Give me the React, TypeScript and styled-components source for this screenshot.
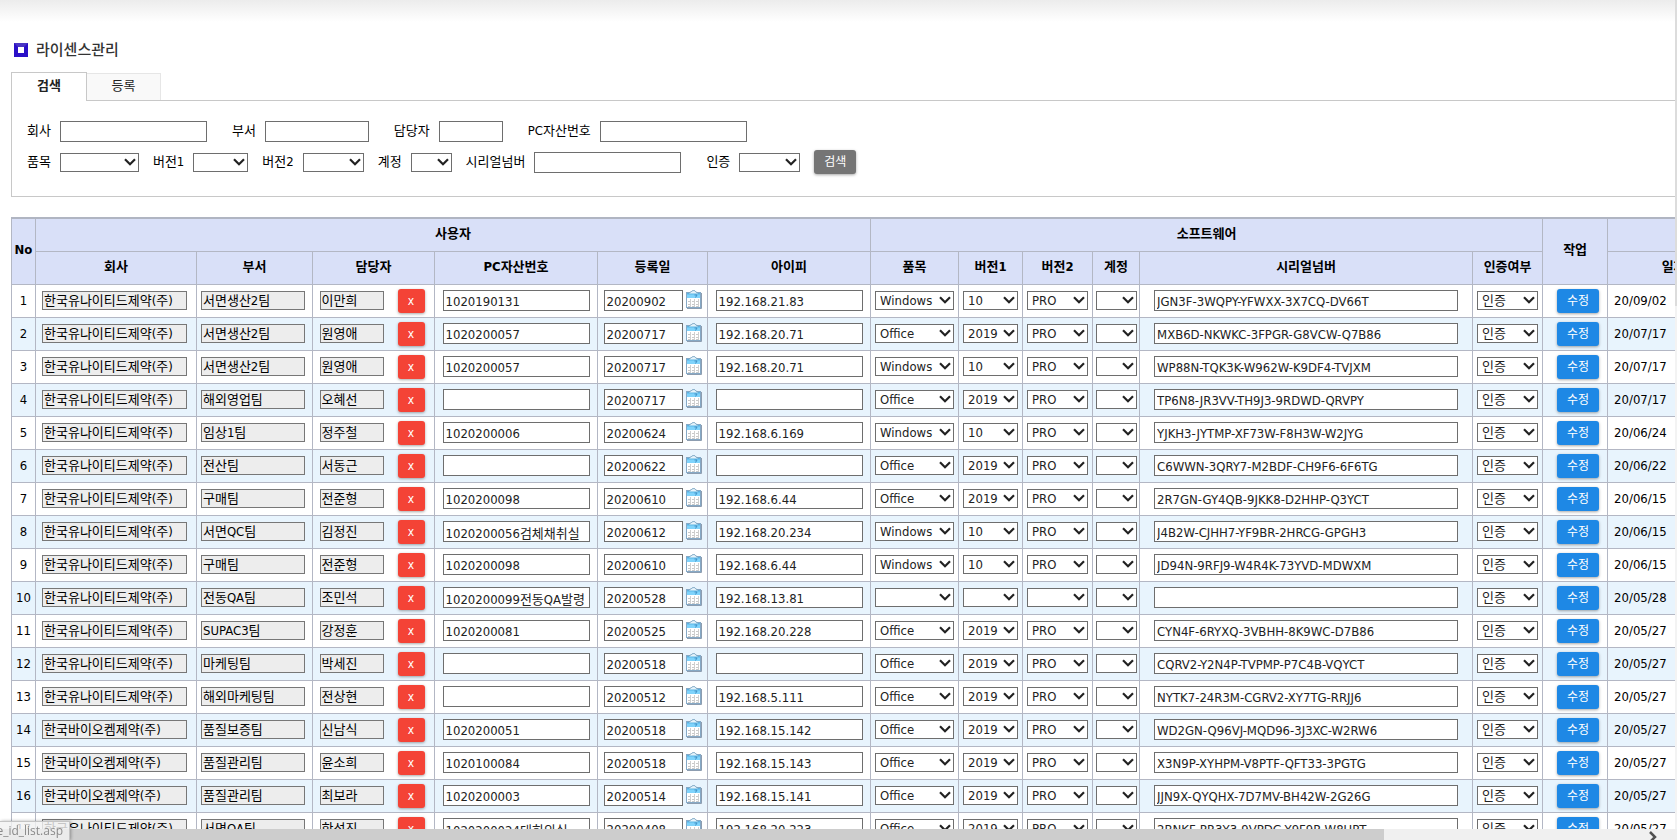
import React from 'react';
import styled, { createGlobalStyle, css } from 'styled-components';

const fontStack = `'DejaVu Sans Condensed', 'Noto Sans CJK KR', sans-serif`;

const GlobalStyle = createGlobalStyle`
  *, *::before, *::after { box-sizing: border-box; }
  body {
    margin: 0;
    background: #fff;
    color: #000;
    font-family: ${fontStack};
    font-size: 13px;
    line-height: 16px;
  }
  input, select, button { font: inherit; }
`;

const Shell = styled.div`
  display: grid;
  grid-template-columns: minmax(0, 1fr) 2px;
  grid-template-rows: minmax(0, 1fr) 11px;
  height: 100vh;
  overflow: hidden;
`;

const Content = styled.main`
  overflow: auto;
  scrollbar-width: none;
  padding-left: 11px;
  background: linear-gradient(#ececec, #fff) 0 0 / 100% 22px no-repeat;
`;

const SideRail = styled.div`
  background: linear-gradient(#dcdcdc, #dcdcdc) 0 0 / 100% 306px no-repeat #f3f3f3;
`;

const BottomRail = styled.div`
  grid-column: 1 / -1;
  display: flex;
  justify-content: space-between;
  background: #f0f0f0;
`;

const RailThumb = styled.div`
  width: 82.5%;
  background: #cdcdcd;
`;

const RailArrow = styled.svg`
  width: 10px;
  height: 11px;
  margin-right: 18px;
`;

const Title = styled.h1`
  display: flex;
  align-items: center;
  gap: 8px;
  height: 24px;
  margin: 38px 0 10px 3px;
  font-size: 15px;
  font-weight: 500;
  color: #333;
`;

const TitleMark = styled.span`
  width: 14px;
  height: 14px;
  border: 4px solid #2a0fc8;
  border-top-color: #4a35c4;
  background: #fff;
`;

const Tabs = styled.div`
  display: flex;
  align-items: flex-end;
  height: 28px;
`;

const Tab = styled.button<{ $active?: boolean }>`
  padding: 0 0 2px;
  border: 1px solid #e6e6e6;
  border-bottom: 0;
  background: #f9f9f9;
  color: #222;
  width: 74px;
  height: 27px;
  border-left: 0;
  ${(p) =>
    p.$active &&
    css`
      position: relative;
      width: 76px;
      height: 29px;
      margin-bottom: -1px;
      border: 1px solid #c8c8c8;
      border-bottom: 0;
      background: #fff;
      font-weight: 700;
    `}
`;

const SearchPanel = styled.form`
  border: 1px solid #c8c8c8;
  border-right: 0;
  height: 97px;
  margin-bottom: 20px;
  padding: 16px 15px;
  display: flex;
  flex-direction: column;
  gap: 3px;
`;

const SearchRow = styled.div`
  display: flex;
  align-items: center;
  height: 28px;
`;

const Field = styled.label<{ $wide?: boolean }>`
  display: flex;
  align-items: center;
  gap: 9px;
  margin-right: ${(p) => (p.$wide ? 25 : 14)}px;
  white-space: nowrap;
`;

const TextInput = styled.input<{ $w: number }>`
  width: ${(p) => p.$w}px;
  height: 21px;
  padding: 2px 2px 0;
  border: 1px solid #6e6e6e;
  border-radius: 0;
  background: #fff;
  color: #222;
  outline: 0;
`;

const LockedInput = styled(TextInput)`
  height: 19px;
  padding: 0 1px 2px;
  border-color: #777;
  background: #ededed;
  color: #000;
`;

const SelectBox = styled.span<{ $w: number }>`
  display: inline-grid;
  width: ${(p) => p.$w}px;
  height: 19px;
  vertical-align: middle;
  > * { grid-area: 1 / 1; }
`;

const NativeSelect = styled.select`
  appearance: none;
  width: 100%;
  height: 19px;
  padding: 1px 0 0 4px;
  border: 1px solid #6e6e6e;
  border-radius: 0;
  background: #fff;
  color: #222;
  outline: 0;
`;

const Chevron = styled.svg`
  width: 12px;
  height: 8px;
  margin: 0 3px 1px 0;
  justify-self: end;
  align-self: center;
  pointer-events: none;
`;

const ActionButton = styled.button<{ $tone: 'grey' | 'red' | 'blue' }>`
  width: ${(p) => (p.$tone === 'red' ? 27 : 42)}px;
  height: 24px;
  padding: 0;
  border: 0;
  border-radius: 3px;
  background: ${(p) => ({ grey: '#757575', red: '#f44336', blue: '#1e88e5' })[p.$tone]};
  box-shadow: 0 1px 3px rgba(0, 0, 0, 0.35);
  color: #fff;
  font-size: 12px;
`;

const Grid = styled.table`
  table-layout: fixed;
  width: 2000px;
  border-collapse: collapse;
  border-top: 2px solid #b0b5c2;
`;

const HeadCell = styled.th`
  height: 33px;
  padding: 0 0 2px;
  border: 1px solid #b3b7c4;
  background: #d9e0f8;
  font-weight: 700;
  white-space: nowrap;
`;

const BodyRow = styled.tr`
  height: 33px;
  &:nth-child(even) { background: #e8f4fd; }
`;

const Cell = styled.td<{ $side?: 'start' | 'end' }>`
  padding: 0;
  padding-left: ${(p) => (p.$side === 'start' ? 6 : 0)}px;
  padding-right: ${(p) => (p.$side === 'end' ? 3 : 0)}px;
  border: 1px solid #b3b7c4;
  text-align: ${(p) => (p.$side === 'start' ? 'left' : 'center')};
`;

const CellLine = styled.div<{ $gap?: number }>`
  display: flex;
  align-items: center;
  justify-content: center;
  gap: ${(p) => p.$gap ?? 0}px;
  height: 32px;
`;

const CalendarButton = styled.button`
  width: 16px;
  height: 22px;
  padding: 0;
  border: 0;
  background: none;
  display: flex;
`;

const StatusBubble = styled.div`
  position: fixed;
  left: 0;
  bottom: 0;
  width: 70px;
  height: 19px;
  display: flex;
  justify-content: flex-end;
  padding: 1px 6px 0 0;
  overflow: hidden;
  border: 1px solid #c4c4c4;
  border-width: 1px 1px 0 0;
  background: rgba(242, 242, 242, 0.82);
  box-shadow: 1px 0 3px rgba(0, 0, 0, 0.3);
  color: #8a8a8a;
  font-family: 'Open Sans', sans-serif;
  font-size: 12px;
  white-space: nowrap;
`;

function Select({ w, value = '', name }: { w: number; value?: string; name?: string }) {
  return (
    <SelectBox $w={w}>
      <NativeSelect aria-label={name} defaultValue={value}>
        <option>{value}</option>
      </NativeSelect>
      <Chevron viewBox="0 0 12 8" aria-hidden="true">
        <path d="M1 1.2 6 6.2 11 1.2" fill="none" stroke="#222" strokeWidth="2.2" />
      </Chevron>
    </SelectBox>
  );
}

function CalendarIcon() {
  return (
    <svg width="16" height="19" viewBox="0 0 16 19" aria-hidden="true">
      <path d="M15.5 3v15.5H1" fill="none" stroke="#8d9db0" />
      <rect x="0.5" y="2.5" width="14" height="15" fill="#fff" stroke="#86a9c6" />
      <path d="M1 3h13v5H1z" fill="#7fd3fb" />
      <path d="M1 3h13v1.5H1z" fill="#5bb4e4" />
      <path d="M3 3.5C3.5 1.5 5 2.5 5.5 1.5S9 0 9.500 1.500 11.500 1.500 12 3.500" fill="#e6f3fa" stroke="#6f9dbd" />
      <path d="M8.500 5h2.500L9.500 7.500" fill="none" stroke="#3f8fc4" />
      <path d="M2 11.500h3M6 11.500h3M10 11.500h3M2 14.500h3M6 14.500h3M10 14.500h3M2 16.500h3M6 16.500h3M10 16.500h3" stroke="#c9c9c9" />
      <path d="M4.500 9v8M8.500 9v8M12.500 9v8" stroke="#cfcfcf" />
    </svg>
  );
}

const UNITED = '한국유나이티드제약(주)';
const BIOCHEM = '한국바이오켐제약(주)';

type Row = [string, string, string, string, string, string, string, string, string, string, string];

const rows: Row[] = [
  [UNITED, '서면생산2팀', '이만희', '1020190131', '20200902', '192.168.21.83', 'Windows', '10', 'PRO', 'JGN3F-3WQPY-YFWXX-3X7CQ-DV66T', '20/09/02'],
  [UNITED, '서면생산2팀', '원영애', '1020200057', '20200717', '192.168.20.71', 'Office', '2019', 'PRO', 'MXB6D-NKWKC-3FPGR-G8VCW-Q7B86', '20/07/17'],
  [UNITED, '서면생산2팀', '원영애', '1020200057', '20200717', '192.168.20.71', 'Windows', '10', 'PRO', 'WP88N-TQK3K-W962W-K9DF4-TVJXM', '20/07/17'],
  [UNITED, '해외영업팀', '오혜선', '', '20200717', '', 'Office', '2019', 'PRO', 'TP6N8-JR3VV-TH9J3-9RDWD-QRVPY', '20/07/17'],
  [UNITED, '임상1팀', '정주철', '1020200006', '20200624', '192.168.6.169', 'Windows', '10', 'PRO', 'YJKH3-JYTMP-XF73W-F8H3W-W2JYG', '20/06/24'],
  [UNITED, '전산팀', '서동근', '', '20200622', '', 'Office', '2019', 'PRO', 'C6WWN-3QRY7-M2BDF-CH9F6-6F6TG', '20/06/22'],
  [UNITED, '구매팀', '전준형', '1020200098', '20200610', '192.168.6.44', 'Office', '2019', 'PRO', '2R7GN-GY4QB-9JKK8-D2HHP-Q3YCT', '20/06/15'],
  [UNITED, '서면QC팀', '김정진', '1020200056검체채취실', '20200612', '192.168.20.234', 'Windows', '10', 'PRO', 'J4B2W-CJHH7-YF9BR-2HRCG-GPGH3', '20/06/15'],
  [UNITED, '구매팀', '전준형', '1020200098', '20200610', '192.168.6.44', 'Windows', '10', 'PRO', 'JD94N-9RFJ9-W4R4K-73YVD-MDWXM', '20/06/15'],
  [UNITED, '전동QA팀', '조민석', '1020200099전동QA발령', '20200528', '192.168.13.81', '', '', '', '', '20/05/28'],
  [UNITED, 'SUPAC3팀', '강정훈', '1020200081', '20200525', '192.168.20.228', 'Office', '2019', 'PRO', 'CYN4F-6RYXQ-3VBHH-8K9WC-D7B86', '20/05/27'],
  [UNITED, '마케팅팀', '박세진', '', '20200518', '', 'Office', '2019', 'PRO', 'CQRV2-Y2N4P-TVPMP-P7C4B-VQYCT', '20/05/27'],
  [UNITED, '해외마케팅팀', '전상현', '', '20200512', '192.168.5.111', 'Office', '2019', 'PRO', 'NYTK7-24R3M-CGRV2-XY7TG-RRJJ6', '20/05/27'],
  [BIOCHEM, '품질보증팀', '신남식', '1020200051', '20200518', '192.168.15.142', 'Office', '2019', 'PRO', 'WD2GN-Q96VJ-MQD96-3J3XC-W2RW6', '20/05/27'],
  [BIOCHEM, '품질관리팀', '윤소희', '1020100084', '20200518', '192.168.15.143', 'Office', '2019', 'PRO', 'X3N9P-XYHPM-V8PTF-QFT33-3PGTG', '20/05/27'],
  [BIOCHEM, '품질관리팀', '최보라', '1020200003', '20200514', '192.168.15.141', 'Office', '2019', 'PRO', 'JJN9X-QYQHX-7D7MV-BH42W-2G26G', '20/05/27'],
  [UNITED, '서면QA팀', '한성진', '1020200024대회의실', '20200408', '192.168.20.223', 'Office', '2019', 'PRO', '2BNKF-PR3Y3-9VPDG-Y9F9R-W8UPT', '20/05/27'],
];

const columnWidths = [24, 161, 116, 122, 163, 110, 163, 88, 64, 70, 47, 333, 70, 65, 132];
const userColumns = ['회사', '부서', '담당자', 'PC자산번호', '등록일', '아이피'];
const softwareColumns = ['품목', '버전1', '버전2', '계정', '시리얼넘버', '인증여부'];

function LicenseRow({ row, no }: { row: Row; no: number }) {
  const [company, dept, person, asset, date, ip, item, v1, v2, serial, workDate] = row;
  return (
    <BodyRow>
      <Cell>{no}</Cell>
      <Cell $side="end"><CellLine><LockedInput $w={145} aria-label="회사" disabled defaultValue={company} /></CellLine></Cell>
      <Cell $side="end"><CellLine><LockedInput $w={104} aria-label="부서" disabled defaultValue={dept} /></CellLine></Cell>
      <Cell $side="end">
        <CellLine $gap={14}>
          <LockedInput $w={64} aria-label="담당자" disabled defaultValue={person} />
          <ActionButton type="button" $tone="red">x</ActionButton>
        </CellLine>
      </Cell>
      <Cell><CellLine><TextInput $w={147} aria-label="PC자산번호" defaultValue={asset} /></CellLine></Cell>
      <Cell>
        <CellLine $gap={3}>
          <TextInput $w={79} aria-label="등록일" defaultValue={date} />
          <CalendarButton type="button" aria-label="달력"><CalendarIcon /></CalendarButton>
        </CellLine>
      </Cell>
      <Cell><CellLine><TextInput $w={147} aria-label="아이피" defaultValue={ip} /></CellLine></Cell>
      <Cell><CellLine><Select w={79} name="품목" value={item} /></CellLine></Cell>
      <Cell><CellLine><Select w={55} name="버전1" value={v1} /></CellLine></Cell>
      <Cell><CellLine><Select w={61} name="버전2" value={v2} /></CellLine></Cell>
      <Cell><CellLine><Select w={41} name="계정" /></CellLine></Cell>
      <Cell><CellLine><TextInput $w={304} aria-label="시리얼넘버" defaultValue={serial} /></CellLine></Cell>
      <Cell><CellLine><Select w={61} name="인증여부" value="인증" /></CellLine></Cell>
      <Cell $side="start"><CellLine><ActionButton type="button" $tone="blue">수정</ActionButton></CellLine></Cell>
      <Cell $side="start">{workDate}</Cell>
      <Cell />
    </BodyRow>
  );
}

export default function App() {
  return (
    <>
      <GlobalStyle />
      <Shell>
        <Content>
          <Title><TitleMark />라이센스관리</Title>
          <Tabs>
            <Tab type="button" $active>검색</Tab>
            <Tab type="button">등록</Tab>
          </Tabs>
          <SearchPanel onSubmit={(e) => e.preventDefault()}>
            <SearchRow>
              <Field $wide>회사<TextInput $w={147} /></Field>
              <Field $wide>부서<TextInput $w={104} /></Field>
              <Field $wide>담당자<TextInput $w={64} /></Field>
              <Field $wide>PC자산번호<TextInput $w={147} /></Field>
            </SearchRow>
            <SearchRow>
              <Field>품목<Select w={79} /></Field>
              <Field>버전1<Select w={55} /></Field>
              <Field>버전2<Select w={61} /></Field>
              <Field>계정<Select w={41} /></Field>
              <Field $wide>시리얼넘버<TextInput $w={147} /></Field>
              <Field>인증<Select w={61} /></Field>
              <ActionButton type="submit" $tone="grey">검색</ActionButton>
            </SearchRow>
          </SearchPanel>
          <Grid>
            <colgroup>
              {columnWidths.map((w, i) => <col key={i} width={w} />)}
              <col />
            </colgroup>
            <thead>
              <tr>
                <HeadCell rowSpan={2}>No</HeadCell>
                <HeadCell colSpan={6}>사용자</HeadCell>
                <HeadCell colSpan={6}>소프트웨어</HeadCell>
                <HeadCell rowSpan={2}>작업</HeadCell>
                <HeadCell colSpan={2} />
              </tr>
              <tr>
                {userColumns.map((c) => <HeadCell key={c}>{c}</HeadCell>)}
                {softwareColumns.map((c) => <HeadCell key={c}>{c}</HeadCell>)}
                <HeadCell>일자</HeadCell>
                <HeadCell />
              </tr>
            </thead>
            <tbody>
              {rows.map((row, i) => <LicenseRow key={i} row={row} no={i + 1} />)}
            </tbody>
          </Grid>
        </Content>
        <SideRail />
        <BottomRail>
          <RailThumb />
          <RailArrow viewBox="0 0 10 11" aria-hidden="true">
            <path d="M1 3 6 8 2 12" fill="none" stroke="#505050" strokeWidth="2.5" />
          </RailArrow>
        </BottomRail>
      </Shell>
      <StatusBubble>te_id_list.asp</StatusBubble>
    </>
  );
}
